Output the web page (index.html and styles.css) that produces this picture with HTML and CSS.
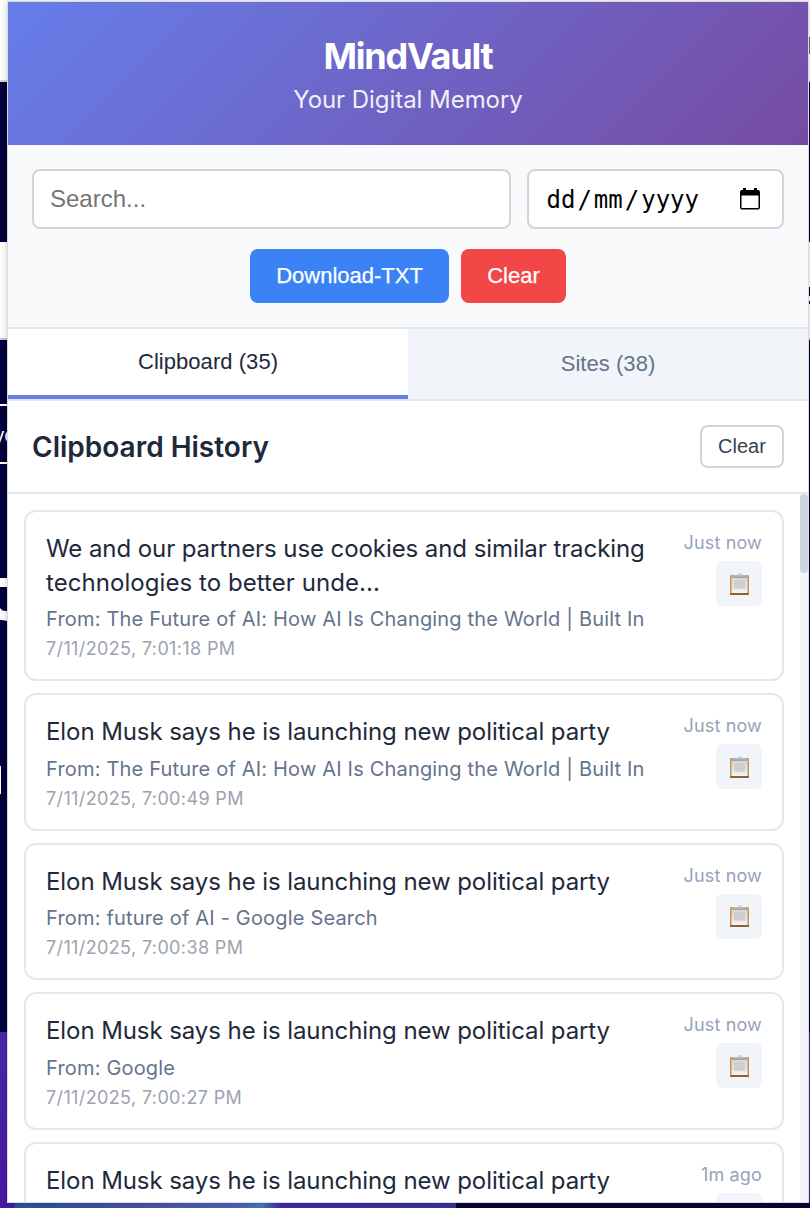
FILE: index.html
```html
<!DOCTYPE html>
<html lang="en">
<head>
<meta charset="utf-8">
<title>MindVault</title>
<link rel="stylesheet" href="styles.css">
</head>
<body>
<svg class="defs" width="0" height="0" aria-hidden="true">
  <defs>
    <linearGradient id="paper" x1="0" y1="0" x2="0" y2="1"><stop offset="0" stop-color="#d2d4d6"/><stop offset=".7" stop-color="#e6e6e6"/><stop offset="1" stop-color="#f6f6f6"/></linearGradient>
    <symbol id="clip" viewBox="0 0 19 22">
      <rect x="0" y="2" width="19" height="20" rx="1.2" fill="#c79550"/>
      <rect x="0" y="20" width="19" height="2" rx=".8" fill="#8f6031"/>
      <rect x="1.500" y="3.500" width="16" height="16.500" fill="url(#paper)"/>
      <rect x="4" y="7.500" width="11" height="8" fill="#cbcbcb"/>
      <path d="M4 9.500h11M4 11.500h11M4 13.500h11" stroke="#d6d6d6" stroke-width=".6"/>
      <path d="M2.500 3.800V2.300H7L8.300.6Q9.500-.2 10.700.6L12 2.300h4.500v1.500z" fill="#b9c2cc"/>
      <path d="M2 4.200h15" stroke="#8d8d8d" stroke-width="1"/>
      <circle cx="9.500" cy="1.500" r=".6" fill="#eef2f6"/>
    </symbol>
  </defs>
</svg>
<div class="backdrop">
  <i class="bd left-line a"></i><i class="bd left-line b"></i>
  <span class="bd word">yo</span>
  <i class="bd bar one"></i><i class="bd bar two"></i><i class="bd bar three"></i>
  <i class="bd tick r1"></i><i class="bd tick r2"></i><i class="bd tick r3"></i>
  <i class="bd floor"></i>
</div>
<main class="popup">
  <header class="header">
    <h1 class="brand">MindVault</h1>
    <p class="tagline">Your Digital Memory</p>
  </header>
  <section class="controls">
    <div class="filters">
      <input class="search" type="text" placeholder="Search...">
      <div class="date"><span class="parts"><span>dd</span><span>/</span><span>mm</span><span>/</span><span>yyyy</span></span>
        <svg class="cal" width="20" height="22" viewBox="0 0 20 22"><path fill-rule="evenodd" d="M2 2h1V0h3v2h8V0h3v2h1q2 0 2 2v15.500q0 2-2 2H2q-2 0-2-2V4q0-2 2-2zM1.500 7.500v12.500h17v-12.500z"/></svg>
      </div>
    </div>
    <div class="actions"><button class="btn blue">Download-TXT</button><button class="btn red">Clear</button></div>
  </section>
  <nav class="tabs"><button class="tab active">Clipboard (35)</button><button class="tab">Sites (38)</button></nav>
  <div class="section-head"><h2 class="title">Clipboard History</h2><button class="clear">Clear</button></div>
  <div class="scroll">
    <div class="list">
      <article class="card">
        <div class="content"><div class="text">We and our partners use cookies and similar tracking<br><span class="wide">technologies to better unde...</span></div><div class="from">From: The Future of AI: How AI Is Changing the World | Built In</div><div class="stamp">7/11/2025, 7:01:18 PM</div></div>
        <div class="side"><span class="ago">Just now</span><button class="copy"><svg width="19" height="22"><use href="#clip"/></svg></button></div>
      </article>
      <article class="card">
        <div class="content"><div class="text">Elon Musk says he is launching new political party</div><div class="from">From: The Future of AI: How AI Is Changing the World | Built In</div><div class="stamp">7/11/2025, 7:00:49 PM</div></div>
        <div class="side"><span class="ago">Just now</span><button class="copy"><svg width="19" height="22"><use href="#clip"/></svg></button></div>
      </article>
      <article class="card">
        <div class="content"><div class="text">Elon Musk says he is launching new political party</div><div class="from">From: future of AI - Google Search</div><div class="stamp">7/11/2025, 7:00:38 PM</div></div>
        <div class="side"><span class="ago">Just now</span><button class="copy"><svg width="19" height="22"><use href="#clip"/></svg></button></div>
      </article>
      <article class="card">
        <div class="content"><div class="text">Elon Musk says he is launching new political party</div><div class="from">From: Google</div><div class="stamp">7/11/2025, 7:00:27 PM</div></div>
        <div class="side"><span class="ago">Just now</span><button class="copy"><svg width="19" height="22"><use href="#clip"/></svg></button></div>
      </article>
      <article class="card last">
        <div class="content"><div class="text">Elon Musk says he is launching new political party</div></div>
        <div class="side"><span class="ago">1m ago</span><button class="copy"></button></div>
      </article>
    </div>
    <div class="track"><div class="thumb"></div></div>
  </div>
</main>
</body>
</html>
```
FILE: styles.css
```css
* { box-sizing: border-box; }
body { margin: 0; width: 810px; height: 1208px; overflow: hidden; position: relative; font-family: Inter, sans-serif; background: #fff; }
h1, h2, p { margin: 0; }
button { font-family: "Liberation Sans", Arial, sans-serif; border: 0; padding: 0; }
.defs { position: absolute; }
.backdrop { position: absolute; inset: 0; overflow: hidden; background: linear-gradient(#fff 0 80px, #d9dcdc 80px 82px, #04003b 82px 242px, #fff 242px 338px, #c8c8d0 338px 340px, #04003b 340px 1032px, #4a28ae 1032px, #4618a4 1208px); }
.bd { position: absolute; display: block; }
.left-line { left: 0; width: 8px; height: 2px; background: #fff; }
.left-line.a { top: 404px; }
.left-line.b { top: 462px; }
.word { left: -6px; top: 425px; color: #fff; font-size: 19px; line-height: 22px; }
.bar { left: 0; background: #fff; }
.bar.one { top: 578px; width: 8px; height: 9px; }
.bar.two { top: 608px; width: 8px; height: 13px; clip-path: polygon(0 0, 30% 20%, 100% 25%, 100% 100%, 0 90%); }
.bar.three { top: 766px; width: 1px; height: 28px; }
.tick { left: 808px; width: 2px; background: #04003b; }
.tick.r1 { top: 37px; height: 17px; background: #666; }
.tick.r2 { top: 287px; height: 9px; }
.tick.r3 { top: 301px; height: 3px; }
.floor { left: 0; top: 1202px; width: 810px; height: 6px; background: linear-gradient(90deg, #4618a4 0 14px, #30529b 15px 50px, #46509f 120px, #5360ba 240px, #3f7db5 262px, #412aa5 280px, #37349b 456px, #080536 456px, #080536 100%); }
.popup { position: relative; margin: 2px 0 0 8px; width: 800px; height: 1200px; background: #fff; overflow: hidden; display: flex; flex-direction: column; outline: 1px solid #d9dbdf; box-shadow: 0 0 8px rgba(0,0,0,.25); }
.header { flex: none; height: 143px; text-align: center; color: #fff; padding-top: 32px; background: linear-gradient(135deg, #667eea 0%, #764ba2 100%); }
.brand { font-size: 36px; line-height: 44px; font-weight: 700; letter-spacing: -1.2px; }
.tagline { font-size: 24px; line-height: 30px; margin-top: 7px; letter-spacing: -.05px; opacity: .9; }
.controls { flex: none; height: 184px; padding: 24px; background: #f8fafc; border-bottom: 2px solid #e2e8f0; }
.filters { display: flex; gap: 16px; }
.search { width: 479px; height: 60px; padding: 0 16px; border: 2px solid #d1d5db; border-radius: 8px; background: #fff; font: 24px "Liberation Sans", Arial, sans-serif; }
.search::placeholder { color: #757575; opacity: 1; }
.date { width: 257px; height: 60px; border: 2px solid #d1d5db; border-radius: 8px; background: #fff; color: #000; display: flex; align-items: center; justify-content: space-between; padding: 0 22px 0 17.5px; font: 24px/30px "DejaVu Sans Mono", monospace; }
.parts { display: flex; gap: 2px; padding-top: 2px; }
.actions { display: flex; justify-content: center; gap: 12px; margin-top: 20px; }
.btn { height: 54px; border-radius: 8px; color: #fff; font-size: 22px; -webkit-text-stroke: .25px #fff; }
.blue { width: 199px; background: #3b82f6; }
.red { width: 105px; background: #f34747; }
.tabs { flex: none; display: flex; height: 72px; border-bottom: 2px solid #e2e8f0; }
.tab { flex: 1; font-size: 22px; color: #64748b; background: #f1f5f9; letter-spacing: .05px; }
.tab.active { background: #fff; color: #1e293b; border-bottom: 4px solid #667eea; }
.section-head { flex: none; height: 93px; display: flex; justify-content: space-between; align-items: center; padding: 0 24px; border-bottom: 2px solid #e2e8f0; }
.title { font-size: 28px; line-height: 34px; font-weight: 600; color: #1e293b; }
.clear { width: 84px; height: 43px; margin-top: -1px; border: 2px solid #d1d5db; border-radius: 8px; background: #fff; color: #374151; font-size: 20px; }
.scroll { flex: 1; min-height: 0; display: flex; overflow: hidden; }
.list { width: 792px; padding: 16px; display: flex; flex-direction: column; gap: 12px; }
.card { flex: none; border: 2px solid #e2e8f0; border-radius: 12px; padding: 20px; display: flex; justify-content: space-between; }
.card.last { height: 138px; }
.content { white-space: nowrap; }
.text { font-size: 24px; line-height: 33.6px; color: #1e293b; letter-spacing: -.08px; }
.wide { letter-spacing: .06px; }
.from { font-size: 20px; line-height: 28px; margin-top: 6px; color: #64748b; letter-spacing: .18px; }
.stamp { font-size: 18px; line-height: 26px; margin-top: 3px; height: 23px; color: #9ca3af; letter-spacing: .37px; }
.side { display: flex; flex-direction: column; align-items: flex-end; white-space: nowrap; height: 78px; }
.ago { font-size: 18px; line-height: 22px; color: #94a3b8; letter-spacing: .15px; }
.copy { width: 46px; height: 45px; margin-top: 7px; border-radius: 6px; background: #f1f5f9; display: flex; align-items: center; justify-content: center; }
.track { width: 8px; background: #f1f5f9; }
.thumb { height: 79px; border-radius: 4px; background: #cbd5e1; }
```
